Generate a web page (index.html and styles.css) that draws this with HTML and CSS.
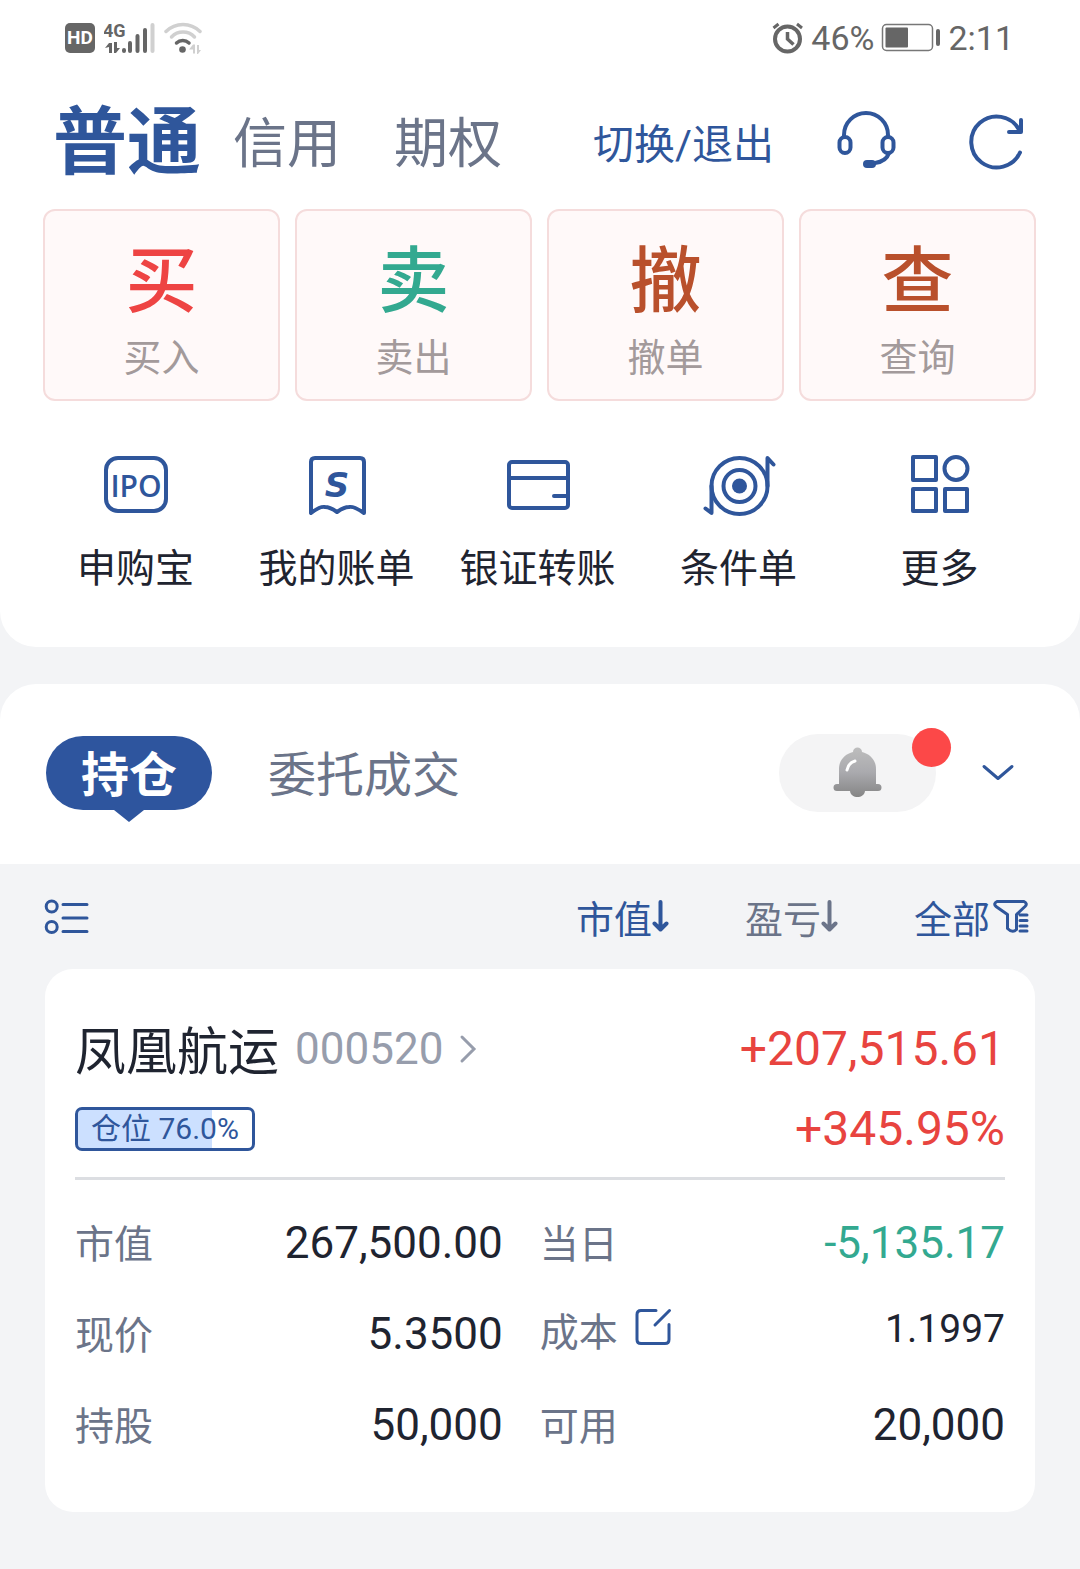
FILE: index.html
```html
<!DOCTYPE html>
<html lang="zh-CN">
<head>
    <meta charset="UTF-8">
    <meta name="viewport" content="width=device-width, initial-scale=1.0">
    <title>交易</title>
    <link rel="stylesheet" href="styles.css">
</head>
<body>
    <section class="panel panel-top">
        <div class="status-bar">
            <div class="status-group">
                <span class="hd-badge">HD</span>
                <svg class="icon-signal" width="51" height="34" viewBox="105 20 51 34" aria-hidden="true">
                    <text x="104" y="36" class="signal-text">4G</text>
                    <path d="M106 47l4-5h3v10h-3v-6zM115 41h3v6h3l-4 5h-2z" fill="#666"/>
                    <g stroke-width="4" stroke-linecap="round" stroke="#666">
                        <path d="M125 49v1M131 42v8M138.500 35v15M146 29v21"/>
                        <path d="M153.500 24v26" stroke="#d0d0d0"/>
                    </g>
                </svg>
                <svg class="icon-wifi" width="38" height="34" viewBox="164 20 38 34" aria-hidden="true">
                    <g fill="none" stroke-width="3.500" stroke-linecap="round">
                        <path d="M166 30.500a24 24 0 0 1 34 0" stroke="#d0d0d0"/>
                        <path d="M171.500 36a16 16 0 0 1 23 0" stroke="#d0d0d0"/>
                        <path d="M176.500 42a9 9 0 0 1 12.500 0" stroke="#666"/>
                    </g>
                    <circle cx="182.500" cy="48.500" r="3.300" fill="#666"/>
                    <path d="M189 48.500l4-5h2v9h-2v-4zM197 44h2v5h2l-3 4h-1z" fill="#d0d0d0"/>
                </svg>
            </div>
            <div class="status-group status-right">
                <svg width="32" height="34" viewBox="774 20 32 34" fill="none" stroke="#666" stroke-width="4" aria-hidden="true">
                    <circle cx="789.500" cy="38" r="12.500"/>
                    <path d="M789.500 31v7l6 5.500" stroke-width="3.500"/>
                    <path d="M775.500 27l5-4M804 27l-5-4" stroke-width="3"/>
                </svg>
                <span>46%</span>
                <svg class="icon-battery" width="60" height="30" viewBox="882 23 60 30" aria-hidden="true">
                    <rect x="883.500" y="24.500" width="50" height="26" rx="4" fill="none" stroke="#777" stroke-width="1.500"/>
                    <rect x="886.500" y="27.500" width="22.500" height="20" rx="1" fill="#666"/>
                    <rect x="937" y="29" width="4" height="17" rx="2" fill="#666"/>
                </svg>
                <span>2:11</span>
            </div>
        </div>

        <header class="header">
            <nav class="account-tabs">
                <button class="account-tab active">普通</button>
                <button class="account-tab">信用</button>
                <button class="account-tab">期权</button>
            </nav>
            <div class="header-actions">
                <button class="switch-btn">切换/退出</button>
                <button class="icon-btn" aria-label="客服">
                    <svg width="76" height="76" viewBox="828 105 76 76" class="line-icon">
                        <path d="M844 136v-1a22 22 0 0 1 44 0v1"/>
                        <rect x="839.500" y="137" width="11" height="16" rx="5.500"/>
                        <rect x="882.500" y="137" width="11" height="16" rx="5.500"/>
                        <path d="M889 153c-2 6-7 9-14 10"/>
                        <rect x="863" y="160" width="13" height="8" rx="4" class="solid"/>
                    </svg>
                </button>
                <button class="icon-btn" aria-label="刷新">
                    <svg width="76" height="76" viewBox="958 105 76 76" class="line-icon">
                        <path d="M1020 152.500a25.500 25.500 0 1 1-1-23"/>
                        <path d="M1021 120v12h-12"/>
                    </svg>
                </button>
            </div>
        </header>

        <div class="trade-grid">
            <button class="trade-btn">
                <span class="trade-glyph buy">买</span>
                <span class="trade-label">买入</span>
            </button>
            <button class="trade-btn">
                <span class="trade-glyph sell">卖</span>
                <span class="trade-label">卖出</span>
            </button>
            <button class="trade-btn">
                <span class="trade-glyph other">撤</span>
                <span class="trade-label">撤单</span>
            </button>
            <button class="trade-btn">
                <span class="trade-glyph other">查</span>
                <span class="trade-label">查询</span>
            </button>
        </div>

        <div class="quick-grid">
            <button class="quick-btn">
                <svg width="76" height="72" viewBox="98 449 76 72" class="line-icon">
                    <rect x="106" y="458" width="60" height="53" rx="12"/>
                    <text x="136" y="497" class="ipo-text">IPO</text>
                </svg>
                <span>申购宝</span>
            </button>
            <button class="quick-btn">
                <svg width="76" height="72" viewBox="299 449 76 72" class="line-icon">
                    <path d="M311 513V462q0-4 4-4h45q4 0 4 4v51q-10-7-15-6-5 0-12 5-7-5-12-5-5-1-14 6z"/>
                    <text x="337" y="497" class="bill-text">S</text>
                </svg>
                <span>我的账单</span>
            </button>
            <button class="quick-btn">
                <svg width="76" height="72" viewBox="499 449 76 72" class="line-icon">
                    <rect x="508" y="462" width="59" height="46" rx="3"/>
                    <path d="M508 478h59M553 496h14"/>
                </svg>
                <span>银证转账</span>
            </button>
            <button class="quick-btn">
                <svg width="76" height="72" viewBox="701 449 76 72" class="line-icon">
                    <circle cx="739.500" cy="486" r="28"/>
                    <circle cx="739.500" cy="486" r="16"/>
                    <circle cx="739.500" cy="486" r="7.500" class="solid"/>
                    <path d="M767.500 486v-28l6 6.500M711.500 486v27l-6-4.500"/>
                </svg>
                <span>条件单</span>
            </button>
            <button class="quick-btn">
                <svg width="76" height="72" viewBox="901 449 76 72" class="line-icon">
                    <rect x="912" y="457" width="23" height="23"/>
                    <circle cx="955" cy="468.500" r="11.500"/>
                    <rect x="912" y="489" width="23" height="22"/>
                    <rect x="944" y="489" width="22" height="22"/>
                </svg>
                <span>更多</span>
            </button>
        </div>
    </section>

    <section class="panel panel-tabs">
        <button class="view-tab active">持仓</button>
        <button class="view-tab">委托成交</button>
        <div class="tab-tools">
            <button class="bell-btn" aria-label="提醒">
                <svg width="50" height="54" viewBox="832 746 50 54">
                    <defs>
                        <linearGradient id="bell" x1="0" y1="0" x2="0" y2="1">
                            <stop offset="0" stop-color="#bdbdbd"/>
                            <stop offset="0.500" stop-color="#aaaaae"/>
                            <stop offset="1" stop-color="#858585"/>
                        </linearGradient>
                    </defs>
                    <path fill="url(#bell)" d="M838 784v-15c0-9 6-15 14-17 0-6 9-6 9 0 8 2 14 8 14 17v15h2a3.500 3.500 0 0 1 0 7h-13c-1 8-14 8-15 0h-13a3.500 3.500 0 0 1 0-7z"/>
                    <path d="M846 770c1-5 4-8 8-9" fill="none" stroke="#fff" stroke-width="3" stroke-linecap="round"/>
                </svg>
                <span class="dot"></span>
            </button>
            <button class="expand-btn" aria-label="展开">
                <svg width="34" height="20" viewBox="981 764 34 20" class="line-icon thin">
                    <path d="M984 767.500l14 12 14-12"/>
                </svg>
            </button>
        </div>
    </section>

    <div class="filter-bar">
        <button class="list-btn" aria-label="列表样式">
            <svg width="46" height="38" viewBox="44 898 46 38" class="line-icon thin">
                <circle cx="51.700" cy="906.500" r="5.500"/>
                <circle cx="51.700" cy="927" r="5.500"/>
                <path d="M63 904.500h24M63 918h24M63 931.500h24"/>
            </svg>
        </button>
        <button class="sort-btn active">
            <span>市值</span>
            <svg width="18" height="36" viewBox="653 899 18 36" class="sort-icon">
                <path d="M661.500 902v27M655.500 923.500l6 6 6-6"/>
            </svg>
        </button>
        <button class="sort-btn">
            <span>盈亏</span>
            <svg width="18" height="36" viewBox="653 899 18 36" class="sort-icon">
                <path d="M661.500 902v27M655.500 923.500l6 6 6-6"/>
            </svg>
        </button>
        <button class="sort-btn active">
            <span>全部</span>
            <svg width="40" height="40" viewBox="990 897 40 40" class="sort-icon filter-icon">
                <path d="M997 901.500h27q4 2 1 5l-8.500 8v15q-4 4-9-1v-14l-11.500-8q-3-3 1-5zM1020 915h7M1020 920.500h7M1020 926h7M1020 931h7"/>
            </svg>
        </button>
    </div>

    <article class="card">
        <div class="card-row">
            <a class="stock" href="#">
                <span class="stock-name">凤凰航运</span>
                <span class="stock-code">000520</span>
                <svg width="18" height="32" viewBox="459 1032 18 32" aria-hidden="true">
                    <path d="M462 1036l12 12-12 12" fill="none" stroke="#979dac" stroke-width="3" stroke-linecap="round"/>
                </svg>
            </a>
            <span class="profit">+207,515.61</span>
        </div>
        <div class="card-row card-row-sub">
            <span class="position-tag" style="--position: 76%">仓位 76.0%</span>
            <span class="profit">+345.95%</span>
        </div>
        <table class="details">
            <tr>
                <th scope="row">市值</th>
                <td>267,500.00</td>
                <th scope="row">当日</th>
                <td class="down">-5,135.17</td>
            </tr>
            <tr>
                <th scope="row">现价</th>
                <td>5.3500</td>
                <th scope="row" class="cost-cell">
                    <span class="cost">成本
                        <button class="edit-btn" aria-label="修改成本">
                            <svg width="38" height="42" viewBox="632 1308 38 42" class="line-icon thin">
                                <path d="M654 1310.500h-15q-4 0-4 4v25q0 4 4 4h24q4 0 4-4v-15M653 1325l14.500-14.500"/>
                            </svg>
                        </button>
                    </span>
                </th>
                <td class="cost-cell small">1.1997</td>
            </tr>
            <tr>
                <th scope="row">持股</th>
                <td>50,000</td>
                <th scope="row">可用</th>
                <td>20,000</td>
            </tr>
        </table>
    </article>
</body>
</html>
```
FILE: styles.css
```css
* {
    margin: 0;
    padding: 0;
    box-sizing: border-box;
}

body {
    font-family: Roboto, 'Noto Sans CJK SC', sans-serif;
    font-size: 39px;
    background: #f3f4f6;
    color: #1f2430;
    min-height: 100vh;
}

button {
    font: inherit;
    color: inherit;
    background: none;
    border: none;
    white-space: nowrap;
    cursor: pointer;
}

svg {
    display: block;
    flex: none;
}

.line-icon {
    fill: none;
    stroke: #2f569b;
    stroke-width: 4;
    stroke-linecap: round;
    stroke-linejoin: round;
}

.line-icon.thin {
    stroke-width: 3;
}

.line-icon text,
.line-icon .solid {
    fill: #2f569b;
    stroke: none;
}

.panel {
    background: #fff;
}

.panel-top {
    border-radius: 0 0 36px 36px;
    padding-bottom: 54px;
}

/* status bar */

.status-bar {
    display: flex;
    justify-content: space-between;
    align-items: center;
    height: 76px;
    padding: 0 66px 0 65px;
    font-size: 34px;
    color: #666;
}

.status-group {
    display: flex;
    align-items: center;
    gap: 9px;
}

.status-right {
    gap: 7px;
}

.hd-badge {
    width: 30px;
    height: 30px;
    border-radius: 5px;
    background: #666;
    color: #fff;
    font-size: 19px;
    font-weight: 700;
    line-height: 30px;
    text-align: center;
}

.signal-text {
    font-size: 18px;
    font-weight: 700;
    fill: #666;
}

/* header */

.header {
    display: flex;
    justify-content: space-between;
    align-items: center;
    height: 133px;
    padding: 0 46px 0 53px;
}

.account-tabs,
.header-actions {
    display: flex;
    align-items: center;
}

.account-tab {
    margin-left: 53px;
    padding-top: 4px;
    font-size: 54px;
    line-height: 80px;
    color: #6b7489;
}

.account-tab.active {
    margin-left: 0;
    padding-top: 0;
    font-size: 74px;
    font-weight: 700;
    color: #2f569b;
}

.account-tab.active + .account-tab {
    margin-left: 32px;
}

.header-actions {
    gap: 54px;
}

.switch-btn {
    padding-top: 4px;
    font-size: 41px;
    line-height: 60px;
    color: #2f569b;
}

/* buy / sell tiles */

.trade-grid {
    display: grid;
    grid-template-columns: repeat(4, 1fr);
    gap: 15px;
    padding: 0 44px 0 43px;
}

.trade-btn {
    display: flex;
    flex-direction: column;
    align-items: center;
    gap: 12px;
    padding: 31px 0 17px;
    background: #fff9f9;
    border: 2px solid #f5dcdc;
    border-radius: 12px;
}

.trade-glyph {
    font-size: 72px;
    font-weight: 500;
    line-height: 80px;
}

.trade-glyph.buy {
    color: #ee4443;
}

.trade-glyph.sell {
    color: #33a990;
}

.trade-glyph.other {
    color: #b9502c;
}

.trade-label {
    font-size: 38px;
    line-height: 48px;
    color: #a39a9b;
}

/* shortcuts */

.quick-grid {
    display: grid;
    grid-template-columns: repeat(5, 1fr);
    padding: 48px 40px 0 35px;
}

.quick-btn {
    display: flex;
    flex-direction: column;
    align-items: center;
    gap: 24px;
    line-height: 48px;
}

.ipo-text {
    font-family: 'Open Sans', sans-serif;
    font-size: 30px;
    font-weight: 600;
    text-anchor: middle;
}

.bill-text {
    font-family: 'DejaVu Sans', sans-serif;
    font-size: 34px;
    font-weight: 700;
    font-style: italic;
    text-anchor: middle;
}

/* holdings tabs */

.panel-tabs {
    display: flex;
    align-items: center;
    gap: 56px;
    margin-top: 37px;
    padding: 50px 65px 52px 46px;
    border-radius: 36px 36px 0 0;
}

.view-tab {
    padding-top: 6px;
    font-size: 48px;
    line-height: 68px;
    color: #6b7489;
}

.view-tab.active {
    position: relative;
    padding: 6px 35px 0;
    border-radius: 37px;
    background: #2e559e;
    font-weight: 700;
    color: #fff;
}

.view-tab.active::after {
    content: '';
    position: absolute;
    top: 100%;
    left: 50%;
    margin-left: -15px;
    border: 15px solid transparent;
    border-top: 12px solid #2e559e;
    border-bottom: none;
}

.tab-tools {
    display: flex;
    align-items: center;
    gap: 45px;
    margin-left: auto;
}

.bell-btn {
    position: relative;
    display: flex;
    justify-content: center;
    align-items: center;
    width: 157px;
    height: 78px;
    border-radius: 39px;
    background: #f4f4f5;
}

.dot {
    position: absolute;
    top: -6px;
    right: -15px;
    width: 39px;
    height: 39px;
    border-radius: 50%;
    background: #fc4848;
}

/* sort and filter */

.filter-bar {
    display: flex;
    align-items: center;
    gap: 75px;
    height: 105px;
    padding: 0 50px 0 44px;
}

.list-btn {
    margin-right: auto;
}

.sort-btn {
    display: flex;
    align-items: center;
    font-size: 38px;
    line-height: 48px;
    color: #6b7489;
}

.sort-btn span {
    padding-top: 6px;
}

.sort-btn.active {
    color: #2f569b;
}

.sort-icon {
    fill: none;
    stroke: currentColor;
    stroke-width: 4;
    stroke-linecap: round;
    stroke-linejoin: round;
}

.filter-icon {
    stroke-width: 3;
}

/* position card */

.card {
    margin: 0 45px;
    padding: 48px 30px 42px;
    border-radius: 28px;
    background: #fff;
}

.card-row {
    display: flex;
    justify-content: space-between;
    align-items: center;
    height: 64px;
    line-height: 64px;
}

.card-row-sub {
    height: 99px;
    border-bottom: 3px solid #dcdee2;
    margin-bottom: 17px;
}

.stock {
    display: flex;
    align-items: center;
    gap: 16px;
    color: inherit;
    text-decoration: none;
}

.stock-name {
    padding-top: 7px;
    font-size: 51px;
}

.stock-code {
    font-size: 44px;
    color: #979dac;
}

.profit {
    font-size: 48px;
    color: #e8443f;
}

.position-tag {
    padding: 0 13px;
    border: 3px solid #2f569b;
    border-radius: 7px;
    background: linear-gradient(to right, #cce0ff var(--position), #fff var(--position)) border-box;
    font-size: 30px;
    line-height: 38px;
    color: #2f569b;
}

.details {
    width: 100%;
    table-layout: fixed;
    border-collapse: collapse;
}

.details tr {
    height: 91px;
}

.details th {
    width: 16%;
    padding-bottom: 4px;
    text-align: left;
    font-weight: 400;
    color: #6b7489;
}

.details td {
    width: 30%;
    text-align: right;
    font-size: 44px;
}

.details td + th {
    width: 20%;
    padding-left: 37px;
}

.details th + td:last-child {
    width: 34%;
}

.details td.small {
    font-size: 39px;
}

.details .cost-cell {
    padding-bottom: 10px;
}

.details .down {
    color: #33a990;
}

.cost {
    display: flex;
    align-items: center;
    gap: 16px;
}
```
